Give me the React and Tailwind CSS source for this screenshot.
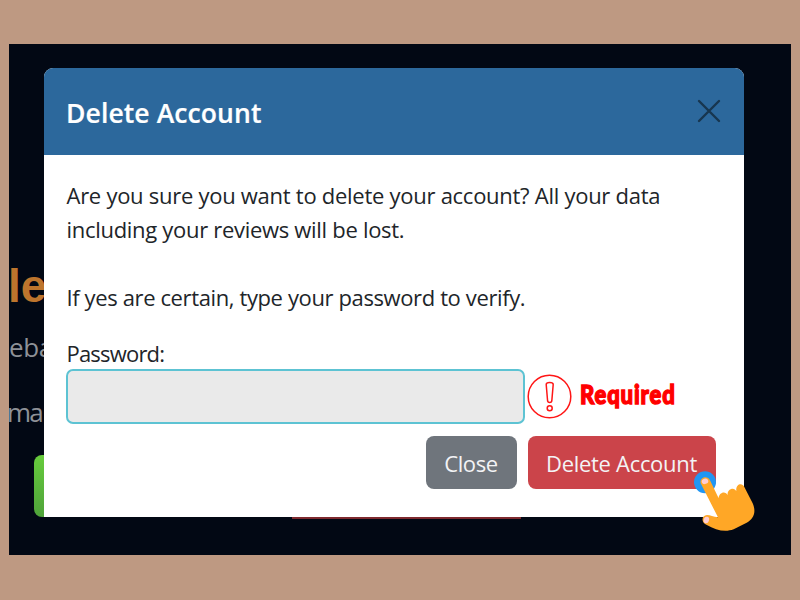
function Backdrop() {
  return (
    <div className="absolute inset-0 overflow-hidden">
      <div className="absolute left-[-1px] top-[215px] font-['Liberation_Sans',sans-serif] text-[46px] font-bold leading-[54px] text-[#bd752d]">
        le
      </div>
      <div className="absolute left-0 top-[285px] font-['Open_Sans',sans-serif] text-[26px] leading-9 tracking-[-0.4px] text-[#8e9197]">eba</div>
      <div className="absolute -left-[2px] top-[350px] font-['Open_Sans',sans-serif] text-[26px] leading-9 tracking-[-1.9px] text-[#8e9197]">ma</div>
      <div className="absolute left-[25px] top-[411px] h-[62px] w-24 rounded-lg bg-linear-to-b from-[#67cc3c] to-[#4fa33a]" />
      <div className="absolute left-[283px] top-[440px] h-[34.5px] w-[229px] bg-[#7e2a2f]" />
    </div>
  );
}

function RequiredNote() {
  return (
    <div className="flex items-center">
      <svg className="ml-[2px] h-[46px] w-[46px]" viewBox="0 0 46 46" fill="none" stroke="#ff1616" strokeWidth="1.5">
        <circle cx="22.5" cy="22.5" r="21.3" />
        <path d="M19.2 10.5 Q19.2 8.5 22.7 8.5 Q26.2 8.5 26.2 10.5 L24.8 27 Q24.5 28.5 22.7 28.5 Q20.9 28.5 20.6 27 Z" />
        <circle cx="22.7" cy="34.3" r="2.5" />
      </svg>
      <span className="ml-[7px] origin-left -translate-y-[3px] scale-x-[0.85] whitespace-nowrap font-['Lato',sans-serif] text-[26px] font-black leading-8 tracking-[1px] text-[#ff0000] [-webkit-text-stroke:1.4px_#ff0000] [stroke-linejoin:round]">
        Required
      </span>
    </div>
  );
}

function PointingHand() {
  return (
    <svg className="absolute left-[694px] top-[471px] h-[60px] w-[62px]" viewBox="102 93 186 180">
      <circle cx="135" cy="127" r="33" fill="#2196f3" />
      <path
        fill="#ffa726"
        d="M122 130 C118 111 143 105 150 121 L176 175 C176 157 197 151 203 166 C200 147 223 139 229 154 C226 132 246 126 253 141 L278 190 C290 217 280 238 260 248 L221 268 C194 278 168 270 139 254 C122 246 125 226 141 225 C151 225 160 231 174 232 Z"
      />
      <ellipse cx="135" cy="124" rx="10" ry="8" fill="#ffcdd2" transform="rotate(-20 135 124)" />
      <ellipse cx="139" cy="240" rx="8" ry="10" fill="#ffcdd2" transform="rotate(20 139 240)" />
    </svg>
  );
}

export default function App() {
  return (
    <div className="relative h-[600px] w-[800px] overflow-hidden bg-[#be9982] pl-[9px] pt-[44px] font-['Open_Sans',sans-serif] text-[#212529]">
      <main className="relative h-[511px] w-[782px] bg-[#020814] pl-[35px] pt-[24px]">
        <Backdrop />
        <section className="relative flex h-[449px] w-[699.5px] flex-col overflow-hidden rounded-t-[9px] bg-white">
          <header className="flex h-[87px] items-center justify-between bg-[#2c689c] pl-[22px] pr-[22px]">
            <h1 className="mt-[5px] whitespace-nowrap text-[26.5px] font-semibold tracking-[0.1px] text-white [-webkit-text-stroke:0.2px_white]">Delete Account</h1>
            <svg className="-mt-[2px] h-[26px] w-[26px]" viewBox="0 0 26 26" stroke="#17364f" strokeWidth="2.4" strokeLinecap="round">
              <path d="M3 3 L23 23 M23 3 L3 23" />
            </svg>
          </header>
          <div className="whitespace-nowrap pl-[22.5px] pt-[23px] text-[22px] leading-[34px]">
            <p><span className="tracking-[-0.27px]">Are you sure you want to delete your account? All your data</span></p>
            <p><span className="tracking-[-0.3px]">including your reviews will be lost.</span></p>
            <p className="mt-[34px]"><span className="tracking-[-0.38px]">If yes are certain, type your password to verify.</span></p>
            <label className="mt-[22px] block"><span className="tracking-[-0.8px]">Password:</span></label>
          </div>
          <div className="-mt-px flex h-[55px] items-center pl-[22px]">
            <div className="h-[55px] w-[459px] rounded-[7px] border-2 border-[#5dc3d3] bg-[#eaeaea]" />
            <RequiredNote />
          </div>
          <div className="mt-[12px] flex justify-end gap-[11px] whitespace-nowrap pr-[28px] text-[22px] text-[#f3f3f5]">
            <button className="h-[53px] w-[91px] rounded-[8px] bg-[#6f757c] pt-[2px] tracking-[-0.4px]">Close</button>
            <button className="h-[53px] w-[188px] rounded-[8px] bg-[#cb444a] pt-[2px] tracking-[-0.3px]">Delete Account</button>
          </div>
        </section>
      </main>
      <PointingHand />
    </div>
  );
}
